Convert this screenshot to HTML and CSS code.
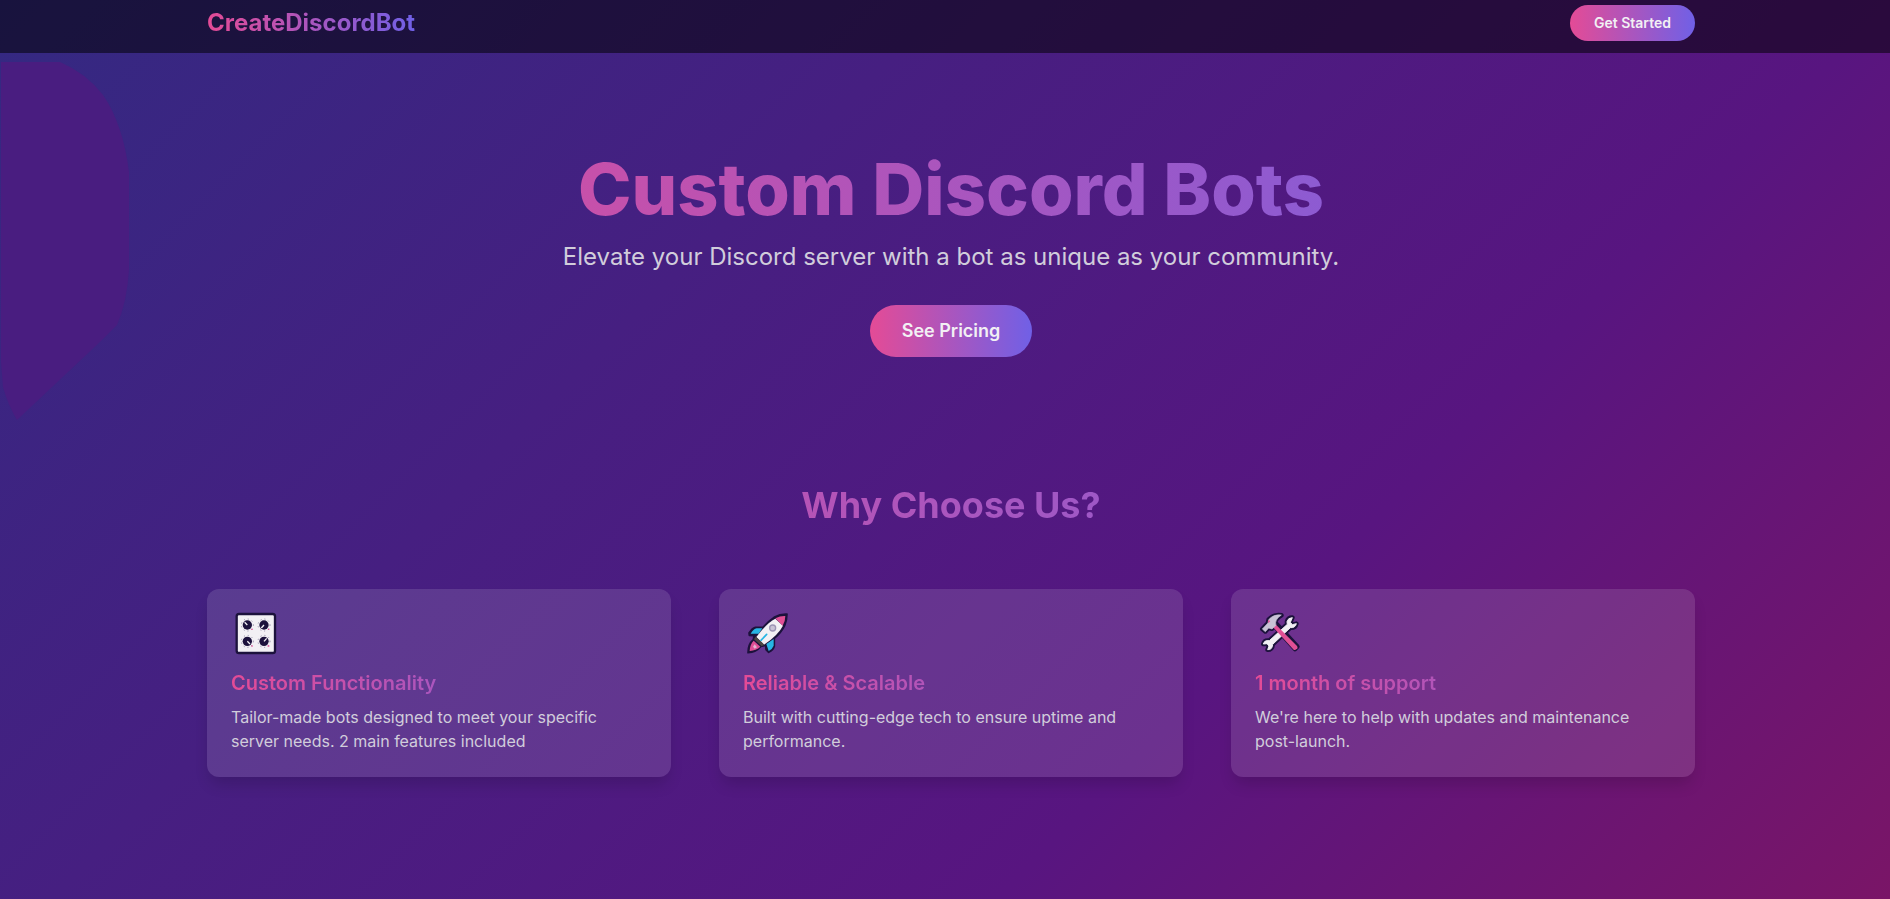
FILE: index.html
```html
<!DOCTYPE html>
<html lang="en">
<head>
    <meta charset="UTF-8">
    <meta name="viewport" content="width=device-width, initial-scale=1.0">
    <title>CreateDiscordBot</title>
    <link rel="stylesheet" href="styles.css">
</head>
<body>
    <header class="navbar">
        <div class="container navbar-inner">
            <a href="#" class="logo gradient-text">CreateDiscordBot</a>
            <a href="#pricing" class="btn btn-small">Get Started</a>
        </div>
    </header>

    <main>
        <!-- Background blob -->
        <svg class="blob" viewBox="0 0 130 360" aria-hidden="true">
            <path d="M1 0H60Q86 11 103 33Q123 62 129 110V208Q127 240 117 263L102 278L17 358Q8 343 3 325L1 300Z"/>
        </svg>

        <section class="hero container">
            <h1 class="gradient-text">Custom Discord Bots</h1>
            <p>Elevate your Discord server with a bot as unique as your community.</p>
            <a href="#pricing" class="btn btn-large">See Pricing</a>
        </section>

        <section class="features container">
            <h2 class="gradient-text">Why Choose Us?</h2>
            <div class="feature-grid">
                <div class="card">
                    <svg class="card-icon" viewBox="33 39 144 120" aria-hidden="true">
                        <rect x="50" y="42" width="115" height="117" rx="7" fill="#f2f0f4" stroke="#1c123c" stroke-width="7"/>
                        <g fill="none" stroke="#8d87a3" stroke-width="3" stroke-dasharray="3 9">
                            <circle cx="82" cy="75" r="18"/>
                            <circle cx="132" cy="75" r="18"/>
                            <circle cx="82" cy="124" r="18"/>
                            <circle cx="132" cy="124" r="18"/>
                        </g>
                        <g fill="#1c123c">
                            <circle cx="82" cy="75" r="14"/>
                            <circle cx="132" cy="75" r="14"/>
                            <circle cx="82" cy="124" r="14"/>
                            <circle cx="132" cy="124" r="14"/>
                        </g>
                        <path d="M82 75L74 67M132 75L124 84M82 124L90 132M132 124L140 115" stroke="#f2f0f4" stroke-width="4"/>
                        <path d="M94 88h4M144 88h4M94 138h4M143 138h5" stroke="#e04f95" stroke-width="4"/>
                    </svg>
                    <h3 class="gradient-text">Custom Functionality</h3>
                    <p>Tailor-made bots designed to meet your specific server needs. 2 main features included</p>
                </div>
                <div class="card">
                    <svg class="card-icon" viewBox="39 39 144 120" aria-hidden="true">
                        <path d="M171 42Q151 41 132 52Q116 62 99 82H76Q67 84 57 99L58 106L72 107L70 119Q54 132 54 158Q78 158 93 139L107 136L108 149L116 157Q130 150 133 139V115Q154 98 164 77Q171 61 171 42Z" fill="#1c123c" stroke="#1c123c" stroke-width="5" stroke-linejoin="round"/>
                        <path d="M97 85H80Q70 87 62 101H86ZM131 117V137Q127 148 116 153L109 132Z" fill="#27b5e4"/>
                        <path d="M136 56Q112 67 79 111L102 134Q145 105 159 77Z" fill="#f2f0f4"/>
                        <path d="M166 48Q152 47 136 55L158 77Q166 63 166 48Z" fill="#e04f95"/>
                        <path d="M77 110L103 134L95 139L72 118Z" fill="#4b4543"/>
                        <path d="M71 122L91 140Q79 151 59 153Q60 132 71 122Z" fill="#e04f95"/>
                        <path d="M74 133L81 142L74 146L69 140Z" fill="#e6b4d2"/>
                        <path d="M93 121L110 103" stroke="#27b5e4" stroke-width="5" stroke-linecap="round"/>
                        <circle cx="128" cy="84" r="9" fill="#c9c3d6" stroke="#9d95b5" stroke-width="4"/>
                    </svg>
                    <h3 class="gradient-text">Reliable &amp; Scalable</h3>
                    <p>Built with cutting-edge tech to ensure uptime and performance.</p>
                </div>
                <div class="card">
                    <svg class="card-icon" viewBox="45 39 144 120" aria-hidden="true">
                        <g stroke="#1c123c" stroke-width="14" stroke-linejoin="round" fill="#1c123c">
                            <path d="M157 53Q144 53 141 65L142 73L88 122Q73 120 70 132L81 131L87 138L83 149Q97 150 98 133L151 83Q166 84 169 71L157 74L151 67Z"/>
                            <path d="M102 76L165 147L172 140L110 72Z"/>
                            <path d="M67 87L76 94L86 83L96 86L106 75Q101 60 124 46Q101 42 86 59L84 69Z"/>
                        </g>
                        <path d="M157 53Q144 53 141 65L142 73L88 122Q73 120 70 132L81 131L87 138L83 149Q97 150 98 133L151 83Q166 84 169 71L157 74L151 67Z" fill="#f2f0f4" stroke="#f2f0f4" stroke-width="3" stroke-linejoin="round"/>
                        <path d="M98 80L161 149Q165 152 169 148L172 145Q174 142 171 138L108 74Z" fill="#e04f95"/>
                        <path d="M67 87L76 95L86 84L96 87L108 76Q102 60 124 45Q101 42 86 59L84 69Z" fill="#c9c3d6" stroke="#c9c3d6" stroke-width="2" stroke-linejoin="round"/>
                        <path d="M84 60L91 63L85 70Z" fill="#e04f95"/>
                    </svg>
                    <h3 class="gradient-text">1 month of support</h3>
                    <p>We're here to help with updates and maintenance post-launch.</p>
                </div>
            </div>
        </section>
    </main>
</body>
</html>
```

FILE: styles.css
```css
* {
    margin: 0;
    padding: 0;
    box-sizing: border-box;
}

body {
    font-family: 'Inter', 'Liberation Sans', sans-serif;
    min-height: 100vh;
    padding-left: 12px;
    color: #f2f0f4;
    background: linear-gradient(135deg, #342982 0%, #581580 68%, #7a1567 100%) no-repeat;
}

a {
    color: inherit;
    text-decoration: none;
}

.container {
    width: 100%;
    max-width: 1536px;
    margin: 0 auto;
    padding: 0 24px;
}

.gradient-text {
    background: linear-gradient(to right, #e44b96, #7060e6);
    -webkit-background-clip: text;
    background-clip: text;
    color: transparent;
}

/* Navbar */
.navbar {
    margin-left: -12px;
    padding: 5px 0 12px 12px;
    background: rgba(0, 0, 0, 0.52);
}

.navbar-inner {
    display: flex;
    justify-content: space-between;
    align-items: center;
}

.logo {
    font-size: 24px;
    line-height: 32px;
    font-weight: 700;
}

.btn {
    display: inline-block;
    border-radius: 999px;
    font-weight: 600;
    background: linear-gradient(to right, #e44b96, #7060e6);
}

.btn-small {
    padding: 8px 24px;
    font-size: 14px;
    line-height: 20px;
}

.btn-large {
    padding: 12px 32px;
    font-size: 18px;
    line-height: 28px;
}

/* Hero */
.blob {
    position: absolute;
    top: 62px;
    left: 0;
    width: 130px;
    height: 360px;
    fill: #491d80;
}

.hero {
    padding-top: 100px;
    padding-bottom: 64px;
    text-align: center;
}

.hero h1 {
    font-size: 72px;
    line-height: 72px;
    font-weight: 800;
    margin-bottom: 16px;
}

.hero p {
    font-size: 24px;
    line-height: 32px;
    color: #d1cddb;
    margin-bottom: 32px;
}

/* Features */
.features {
    padding-top: 64px;
    padding-bottom: 120px;
}

.features h2 {
    font-size: 36px;
    line-height: 40px;
    font-weight: 700;
    text-align: center;
    margin-bottom: 64px;
}

.feature-grid {
    display: grid;
    grid-template-columns: repeat(3, 1fr);
    gap: 48px;
}

.card {
    padding: 24px;
    border-radius: 12px;
    background: rgba(255, 255, 255, 0.12);
    box-shadow: 0 10px 15px -3px rgba(0, 0, 0, 0.15);
}

.card-icon {
    display: block;
    width: 48px;
    height: 40px;
    margin-bottom: 16px;
    overflow: visible;
}

.card h3 {
    font-size: 20px;
    line-height: 28px;
    font-weight: 600;
    margin-bottom: 8px;
}

.card p {
    font-size: 16px;
    line-height: 24px;
    color: #d1cddb;
}

@media (max-width: 900px) {
    .feature-grid {
        grid-template-columns: 1fr;
    }

    .hero h1 {
        font-size: 48px;
        line-height: 56px;
    }
}
```
